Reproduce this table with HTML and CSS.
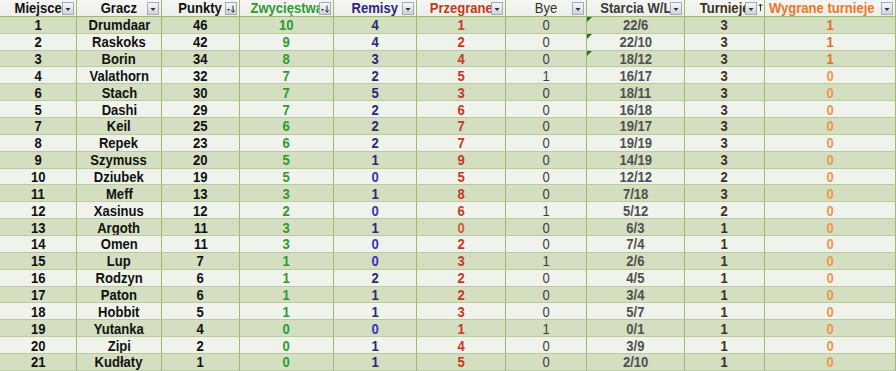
FILE: index.html
```html
<!DOCTYPE html>
<html lang="pl">
<head>
<meta charset="utf-8">
<title>Ranking</title>
<link rel="stylesheet" href="styles.css">
</head>
<body>
<div class="sheet">
  <div class="row head">
    <div class="c"><span>Miejsce</span><i class="fb"><svg width="10" height="12" viewBox="0 0 10 12"><path d="M2.5 5h5L5 8z"/></svg></i></div>
    <div class="c"><span>Gracz</span><i class="fb"><svg width="10" height="12" viewBox="0 0 10 12"><path d="M2.5 5h5L5 8z"/></svg></i></div>
    <div class="c"><span>Punkty</span><i class="fb"><svg width="10" height="12" viewBox="0 0 10 12"><path d="M1 6h3L2.5 8z"/><path d="M7 2.5v6.5M5.3 7.3L7 9.3l1.7-2" fill="none" stroke="#333" stroke-width="1"/></svg></i></div>
    <div class="c"><span>Zwycięstwa</span><i class="fb"><svg width="10" height="12" viewBox="0 0 10 12"><path d="M1 6h3L2.5 8z"/><path d="M7 2.5v6.5M5.3 7.3L7 9.3l1.7-2" fill="none" stroke="#333" stroke-width="1"/></svg></i></div>
    <div class="c"><span>Remisy</span><i class="fb"><svg width="10" height="12" viewBox="0 0 10 12"><path d="M2.5 5h5L5 8z"/></svg></i></div>
    <div class="c"><span>Przegrane</span><i class="fb"><svg width="10" height="12" viewBox="0 0 10 12"><path d="M2.5 5h5L5 8z"/></svg></i></div>
    <div class="c"><span>Bye</span><i class="fb"><svg width="10" height="12" viewBox="0 0 10 12"><path d="M2.5 5h5L5 8z"/></svg></i></div>
    <div class="c"><span>Starcia W/L</span><i class="fb"><svg width="10" height="12" viewBox="0 0 10 12"><path d="M2.5 5h5L5 8z"/></svg></i></div>
    <div class="c"><span>Turnieje</span><i class="fb fb-up"><svg width="10" height="12" viewBox="0 0 10 12"><path d="M2.5 5h5L5 8z"/></svg></i><i class="up"><svg width="5" height="10" viewBox="0 0 5 10"><path d="M2.5 9V2M0.8 4L2.5 2 4.2 4" fill="none" stroke="#333" stroke-width="1"/></svg></i></div>
    <div class="c"><span>Wygrane turnieje</span><i class="fb"><svg width="10" height="12" viewBox="0 0 10 12"><path d="M2.5 5h5L5 8z"/></svg></i></div>
  </div>
  <div class="row"><div class="c"><span>1</span></div><div class="c"><span>Drumdaar</span></div><div class="c"><span>46</span></div><div class="c"><span>10</span></div><div class="c"><span>4</span></div><div class="c"><span>1</span></div><div class="c"><span>0</span></div><div class="c tri"><span>22/6</span></div><div class="c"><span>3</span></div><div class="c"><span>1</span></div></div>
  <div class="row"><div class="c"><span>2</span></div><div class="c"><span>Raskoks</span></div><div class="c"><span>42</span></div><div class="c"><span>9</span></div><div class="c"><span>4</span></div><div class="c"><span>2</span></div><div class="c"><span>0</span></div><div class="c tri"><span>22/10</span></div><div class="c"><span>3</span></div><div class="c"><span>1</span></div></div>
  <div class="row"><div class="c"><span>3</span></div><div class="c"><span>Borin</span></div><div class="c"><span>34</span></div><div class="c"><span>8</span></div><div class="c"><span>3</span></div><div class="c"><span>4</span></div><div class="c"><span>0</span></div><div class="c tri"><span>18/12</span></div><div class="c"><span>3</span></div><div class="c"><span>1</span></div></div>
  <div class="row"><div class="c"><span>4</span></div><div class="c"><span>Valathorn</span></div><div class="c"><span>32</span></div><div class="c"><span>7</span></div><div class="c"><span>2</span></div><div class="c"><span>5</span></div><div class="c"><span>1</span></div><div class="c"><span>16/17</span></div><div class="c"><span>3</span></div><div class="c z"><span>0</span></div></div>
  <div class="row"><div class="c"><span>6</span></div><div class="c"><span>Stach</span></div><div class="c"><span>30</span></div><div class="c"><span>7</span></div><div class="c"><span>5</span></div><div class="c"><span>3</span></div><div class="c"><span>0</span></div><div class="c"><span>18/11</span></div><div class="c"><span>3</span></div><div class="c z"><span>0</span></div></div>
  <div class="row"><div class="c"><span>5</span></div><div class="c"><span>Dashi</span></div><div class="c"><span>29</span></div><div class="c"><span>7</span></div><div class="c"><span>2</span></div><div class="c"><span>6</span></div><div class="c"><span>0</span></div><div class="c"><span>16/18</span></div><div class="c"><span>3</span></div><div class="c z"><span>0</span></div></div>
  <div class="row"><div class="c"><span>7</span></div><div class="c"><span>Keil</span></div><div class="c"><span>25</span></div><div class="c"><span>6</span></div><div class="c"><span>2</span></div><div class="c"><span>7</span></div><div class="c"><span>0</span></div><div class="c"><span>19/17</span></div><div class="c"><span>3</span></div><div class="c z"><span>0</span></div></div>
  <div class="row"><div class="c"><span>8</span></div><div class="c"><span>Repek</span></div><div class="c"><span>23</span></div><div class="c"><span>6</span></div><div class="c"><span>2</span></div><div class="c"><span>7</span></div><div class="c"><span>0</span></div><div class="c"><span>19/19</span></div><div class="c"><span>3</span></div><div class="c z"><span>0</span></div></div>
  <div class="row"><div class="c"><span>9</span></div><div class="c"><span>Szymuss</span></div><div class="c"><span>20</span></div><div class="c"><span>5</span></div><div class="c"><span>1</span></div><div class="c"><span>9</span></div><div class="c"><span>0</span></div><div class="c"><span>14/19</span></div><div class="c"><span>3</span></div><div class="c z"><span>0</span></div></div>
  <div class="row"><div class="c"><span>10</span></div><div class="c"><span>Dziubek</span></div><div class="c"><span>19</span></div><div class="c"><span>5</span></div><div class="c z"><span>0</span></div><div class="c"><span>5</span></div><div class="c"><span>0</span></div><div class="c"><span>12/12</span></div><div class="c"><span>2</span></div><div class="c z"><span>0</span></div></div>
  <div class="row"><div class="c"><span>11</span></div><div class="c"><span>Meff</span></div><div class="c"><span>13</span></div><div class="c"><span>3</span></div><div class="c"><span>1</span></div><div class="c"><span>8</span></div><div class="c"><span>0</span></div><div class="c"><span>7/18</span></div><div class="c"><span>3</span></div><div class="c z"><span>0</span></div></div>
  <div class="row"><div class="c"><span>12</span></div><div class="c"><span>Xasinus</span></div><div class="c"><span>12</span></div><div class="c"><span>2</span></div><div class="c z"><span>0</span></div><div class="c"><span>6</span></div><div class="c"><span>1</span></div><div class="c"><span>5/12</span></div><div class="c"><span>2</span></div><div class="c z"><span>0</span></div></div>
  <div class="row"><div class="c"><span>13</span></div><div class="c"><span>Argoth</span></div><div class="c"><span>11</span></div><div class="c"><span>3</span></div><div class="c"><span>1</span></div><div class="c z"><span>0</span></div><div class="c"><span>0</span></div><div class="c"><span>6/3</span></div><div class="c"><span>1</span></div><div class="c z"><span>0</span></div></div>
  <div class="row"><div class="c"><span>14</span></div><div class="c"><span>Omen</span></div><div class="c"><span>11</span></div><div class="c"><span>3</span></div><div class="c z"><span>0</span></div><div class="c"><span>2</span></div><div class="c"><span>0</span></div><div class="c"><span>7/4</span></div><div class="c"><span>1</span></div><div class="c z"><span>0</span></div></div>
  <div class="row"><div class="c"><span>15</span></div><div class="c"><span>Lup</span></div><div class="c"><span>7</span></div><div class="c"><span>1</span></div><div class="c z"><span>0</span></div><div class="c"><span>3</span></div><div class="c"><span>1</span></div><div class="c"><span>2/6</span></div><div class="c"><span>1</span></div><div class="c z"><span>0</span></div></div>
  <div class="row"><div class="c"><span>16</span></div><div class="c"><span>Rodzyn</span></div><div class="c"><span>6</span></div><div class="c"><span>1</span></div><div class="c"><span>2</span></div><div class="c"><span>2</span></div><div class="c"><span>0</span></div><div class="c"><span>4/5</span></div><div class="c"><span>1</span></div><div class="c z"><span>0</span></div></div>
  <div class="row"><div class="c"><span>17</span></div><div class="c"><span>Paton</span></div><div class="c"><span>6</span></div><div class="c"><span>1</span></div><div class="c"><span>1</span></div><div class="c"><span>2</span></div><div class="c"><span>0</span></div><div class="c"><span>3/4</span></div><div class="c"><span>1</span></div><div class="c z"><span>0</span></div></div>
  <div class="row"><div class="c"><span>18</span></div><div class="c"><span>Hobbit</span></div><div class="c"><span>5</span></div><div class="c"><span>1</span></div><div class="c"><span>1</span></div><div class="c"><span>3</span></div><div class="c"><span>0</span></div><div class="c"><span>5/7</span></div><div class="c"><span>1</span></div><div class="c z"><span>0</span></div></div>
  <div class="row"><div class="c"><span>19</span></div><div class="c"><span>Yutanka</span></div><div class="c"><span>4</span></div><div class="c z"><span>0</span></div><div class="c z"><span>0</span></div><div class="c"><span>1</span></div><div class="c"><span>1</span></div><div class="c"><span>0/1</span></div><div class="c"><span>1</span></div><div class="c z"><span>0</span></div></div>
  <div class="row"><div class="c"><span>20</span></div><div class="c"><span>Zipi</span></div><div class="c"><span>2</span></div><div class="c z"><span>0</span></div><div class="c"><span>1</span></div><div class="c"><span>4</span></div><div class="c"><span>0</span></div><div class="c"><span>3/9</span></div><div class="c"><span>1</span></div><div class="c z"><span>0</span></div></div>
  <div class="row"><div class="c"><span>21</span></div><div class="c"><span>Kudłaty</span></div><div class="c"><span>1</span></div><div class="c z"><span>0</span></div><div class="c"><span>1</span></div><div class="c"><span>5</span></div><div class="c"><span>0</span></div><div class="c"><span>2/10</span></div><div class="c"><span>1</span></div><div class="c z"><span>0</span></div></div>
</div>
</body>
</html>
```
FILE: styles.css
```css
html, body {
  margin: 0;
  padding: 0;
  background: #ffffff;
}

body {
  font-family: "Liberation Sans", Arial, sans-serif;
  font-size: 15px;
  font-weight: bold;
  color: #111111;
  overflow: hidden;
}

.sheet {
  width: 896px;
}

.row {
  display: grid;
  grid-template-columns: 77px 85px 78px 94px 83px 89px 81px 98px 80px 131px;
  height: 16.86px;
  background: #f0f3eb;
}

.row:nth-child(even) {
  background: #d4dec0;
}

.row.head {
  background: linear-gradient(#f6f7f4, #eceee8);
}

.c {
  position: relative;
  box-sizing: border-box;
  border-right: 1px solid #9eb86d;
  border-bottom: 1px solid #bccb9f;
  display: flex;
  justify-content: center;
  align-items: center;
  white-space: nowrap;
  overflow: hidden;
}

.c > span {
  display: block;
  flex-shrink: 0;
  transform: scaleX(0.87);
}

.head .c {
  border-bottom: 1px solid #9eb86d;
}

/* column colours */
.row > .c:nth-child(4) { color: #2f9a34; }
.row > .c:nth-child(5) { color: #2c2878; }
.row > .c:nth-child(5).z { color: #3434b0; }
.row > .c:nth-child(6) { color: #c23a26; }
.row > .c:nth-child(6).z { color: #d05a3c; }
.row > .c:nth-child(7) { color: #3c3c3c; font-weight: normal; }
.row > .c:nth-child(8) { color: #505050; }
.row > .c:nth-child(9) { color: #3c3224; }
.row > .c:nth-child(10) { color: #e07224; }
.row > .c:nth-child(10).z { color: #ee9650; }

.head > .c:nth-child(7) { color: #333333; }
.head > .c:nth-child(8) { color: #3a3a3a; }
.head > .c:nth-child(10) { padding-right: 17px; color: #e8782a; }

/* filter buttons */
.fb {
  position: absolute;
  right: 2px;
  top: 2px;
  width: 12px;
  height: 13px;
  box-sizing: border-box;
  border: 1px solid #a3abb8;
  background: linear-gradient(#f7f8fa, #cdd2da);
  display: flex;
  align-items: center;
  justify-content: center;
}

.fb svg {
  display: block;
  fill: #333333;
}

.fb-up {
  right: 7px;
}

.up {
  position: absolute;
  right: 1px;
  top: 2px;
}

.up svg {
  display: block;
}

/* green "number stored as text" markers */
.tri::before {
  content: "";
  position: absolute;
  left: 0;
  top: 0;
  border-top: 5px solid #1f7a1f;
  border-right: 5px solid transparent;
}
```
